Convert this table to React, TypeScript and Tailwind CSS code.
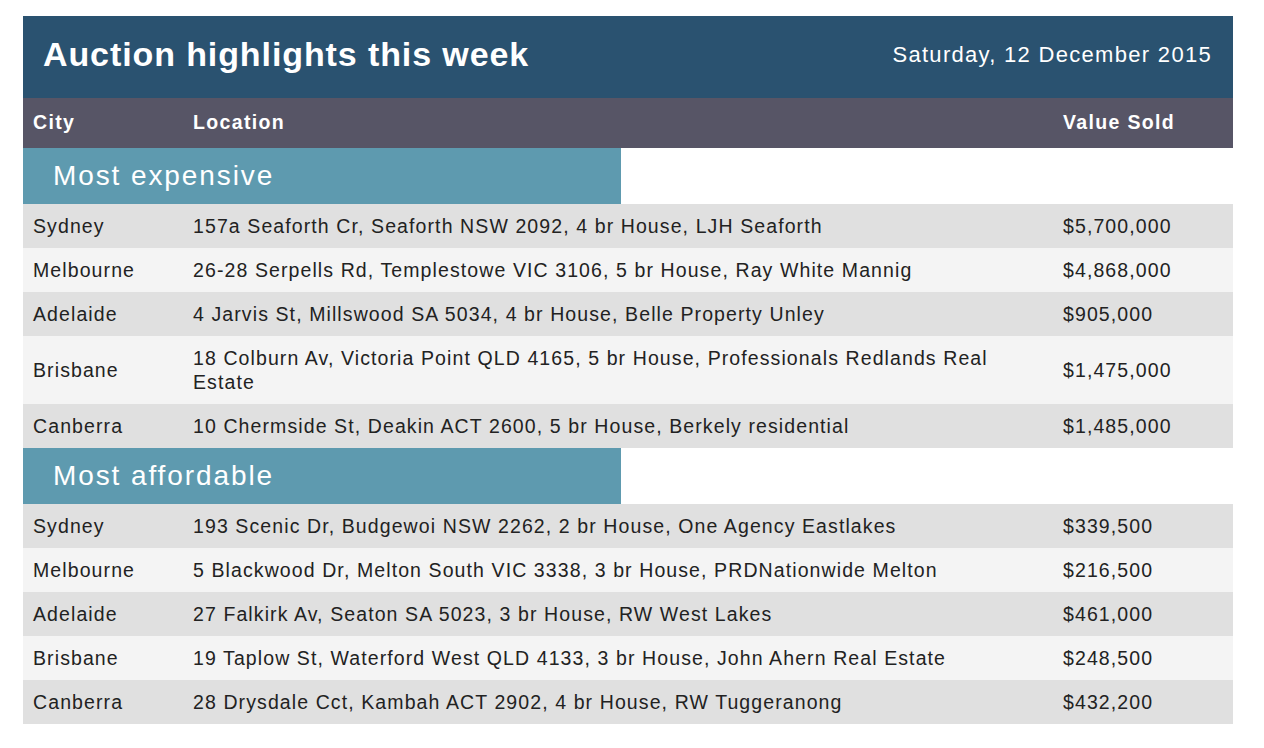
import React from 'react';

type Sale = { city: string; location: string; value: string };

const expensive: Sale[] = [
  { city: 'Sydney', location: '157a Seaforth Cr, Seaforth NSW 2092, 4 br House, LJH Seaforth', value: '$5,700,000' },
  { city: 'Melbourne', location: '26-28 Serpells Rd, Templestowe VIC 3106, 5 br House, Ray White Mannig', value: '$4,868,000' },
  { city: 'Adelaide', location: '4 Jarvis St, Millswood SA 5034, 4 br House, Belle Property Unley', value: '$905,000' },
  { city: 'Brisbane', location: '18 Colburn Av, Victoria Point QLD 4165, 5 br House, Professionals Redlands Real Estate', value: '$1,475,000' },
  { city: 'Canberra', location: '10 Chermside St, Deakin ACT 2600, 5 br House, Berkely residential', value: '$1,485,000' },
];

const affordable: Sale[] = [
  { city: 'Sydney', location: '193 Scenic Dr, Budgewoi NSW 2262, 2 br House, One Agency Eastlakes', value: '$339,500' },
  { city: 'Melbourne', location: '5 Blackwood Dr, Melton South VIC 3338, 3 br House, PRDNationwide Melton', value: '$216,500' },
  { city: 'Adelaide', location: '27 Falkirk Av, Seaton SA 5023, 3 br House, RW West Lakes', value: '$461,000' },
  { city: 'Brisbane', location: '19 Taplow St, Waterford West QLD 4133, 3 br House, John Ahern Real Estate', value: '$248,500' },
  { city: 'Canberra', location: '28 Drysdale Cct, Kambah ACT 2902, 4 br House, RW Tuggeranong', value: '$432,200' },
];

const cols = 'grid grid-cols-[160px_870px_180px]';

const Section = ({ title, rows }: { title: string; rows: Sale[] }) => (
  <>
    <div className="bg-white">
      <div className="w-[598px] h-14 bg-[#5e9aaf] pl-[30px] flex items-center text-white text-[28px] tracking-[1.9px]">
        {title}
      </div>
    </div>
    {rows.map((r, i) => (
      <div
        key={r.city}
        className={`${cols} items-center text-[19.5px] leading-6 tracking-[1.1px] text-[#222] ${i % 2 === 0 ? 'bg-[#e0e0e0]' : 'bg-[#f4f4f4]'}`}
      >
        <div className="pl-[10px] py-[10px]">{r.city}</div>
        <div className="pl-[10px] pr-[40px] py-[10px]">{r.location}</div>
        <div className="pl-[10px] py-[10px]">{r.value}</div>
      </div>
    ))}
  </>
);

export default function App() {
  return (
    <div className="min-h-screen bg-white pt-4 pl-[23px] [font-family:'Liberation_Sans',Arial,sans-serif]">
      <div className="w-[1210px]">
        {/* title bar */}
        <div className="h-[82px] bg-[#2a5270] flex items-center justify-between pl-5 pr-[21px] pb-[5px] text-white">
          <h1 className="text-[34px] font-bold tracking-[0.9px]">Auction highlights this week</h1>
          <span className="text-[22px] tracking-[1.3px]">Saturday, 12 December 2015</span>
        </div>

        {/* column headers */}
        <div className={`${cols} h-[50px] items-center bg-[#575566] text-white text-[19.5px] font-bold tracking-[1.35px]`}>
          <div className="pl-[10px]">City</div>
          <div className="pl-[10px]">Location</div>
          <div className="pl-[10px]">Value Sold</div>
        </div>

        <Section title="Most expensive" rows={expensive} />
        <Section title="Most affordable" rows={affordable} />
      </div>
    </div>
  );
}
